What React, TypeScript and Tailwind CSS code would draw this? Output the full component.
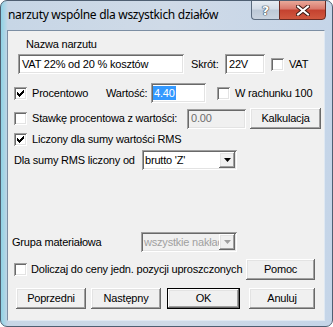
const ui = { fontFamily: '"Liberation Sans", Arial, sans-serif' };

const raised =
  "bg-[#f0f0f0] shadow-[inset_-1px_-1px_#696969,inset_1px_1px_#ffffff,inset_-2px_-2px_#a0a0a0,inset_2px_2px_#e3e3e3]";
const sunken =
  "shadow-[inset_1px_1px_#a0a0a0,inset_-1px_-1px_#ffffff,inset_2px_2px_#696969,inset_-2px_-2px_#e3e3e3]";

const CheckBox = ({ checked }: { checked?: boolean }) => (
  <div className={`w-[13px] h-[13px] shrink-0 bg-white ${sunken} flex items-center justify-center`}>
    {checked && (
      <svg width="7" height="7" viewBox="0 0 7 7">
        <path d="M0 2h1v1h1v1h1V3h1V2h1V1h1V0h1v3h-1v1h-1v1h-1v1h-1v1H2V6H1V5H0z" fill="#000" />
      </svg>
    )}
  </div>
);

const Button = ({ label, w, def }: { label: string; w: string; def?: boolean }) =>
  def ? (
    <div className={`${w} h-[21px] border border-black shrink-0`}>
      <div className={`w-full h-full ${raised} flex items-center justify-center`}>{label}</div>
    </div>
  ) : (
    <div className={`${w} h-[21px] shrink-0 ${raised} flex items-center justify-center`}>{label}</div>
  );

const Arrow = ({ color }: { color: string }) => (
  <svg width="7" height="4" viewBox="0 0 7 4">
    <path d="M0 0h7L3.5 4z" fill={color} />
  </svg>
);

const Combo = ({ value, w, disabled }: { value: string; w: string; disabled?: boolean }) => (
  <div
    className={`${w} h-[20px] shrink-0 ${sunken} ${disabled ? "bg-[#f0f0f0] text-[#a0a0a0]" : "bg-white"} flex items-center p-[2px]`}
  >
    <div className="flex-1 overflow-hidden whitespace-nowrap pl-[1px]">{value}</div>
    <div className={`w-[16px] h-[16px] shrink-0 ${raised} flex items-center justify-center`}>
      <Arrow color={disabled ? "#a0a0a0" : "#000"} />
    </div>
  </div>
);

export default function App() {
  return (
    <div className="w-[333px] h-[327px] bg-white">
      <div className="w-[333px] h-[327px] rounded-[7px] border border-[#4f5f72] bg-[linear-gradient(90deg,#8fd3e6_0px,#c7d6e6_7px,#cfdae7_50%,#c5d5e8_100%)] flex flex-col overflow-hidden">
        {/* title bar */}
        <div className="h-[29px] flex items-start shrink-0">
          <div
            className="pl-[7px] pt-[6px] text-[12px] leading-[16px] tracking-[-0.3px] text-black"
            style={{ fontFamily: '"Noto Sans", "Open Sans", sans-serif' }}
          >
            narzuty wspólne dla wszystkich działów
          </div>
          <div className="ml-auto mr-[6px] flex -mt-[1px]">
            <div className="w-[28px] h-[20px] rounded-bl-[4px] border border-[#5b6b7e] border-r-0 bg-[linear-gradient(#e6ecf3,#d3dce7_45%,#bcc8d6_50%,#c9d3df)] flex items-center justify-center">
              <span
                className="text-white font-bold text-[13px] leading-none"
                style={{ fontFamily: '"DejaVu Sans", sans-serif', textShadow: "0 0 1px #2c3540, 0 0 1px #2c3540, 0 0 1px #2c3540" }}
              >
                ?
              </span>
            </div>
            <div className="w-[47px] h-[20px] rounded-br-[4px] border border-[#6b2a22] bg-[linear-gradient(#e9a99a,#d9776a_45%,#c4412f_50%,#d0583f)] flex items-center justify-center">
              <svg width="14" height="11" viewBox="0 0 14 11">
                <path d="M2 1.5l10 8M12 1.5l-10 8" stroke="#3b1a14" strokeWidth="4" strokeLinecap="square" />
                <path d="M2 1.5l10 8M12 1.5l-10 8" stroke="#ffffff" strokeWidth="2" strokeLinecap="square" />
              </svg>
            </div>
          </div>
        </div>

        {/* client area */}
        <div
          className="ml-[6px] w-[318px] h-[291px] border border-[#7c8ea3] border-r-[#dfe8f2] border-b-[#dfe8f2] bg-[#f0f0f0] text-[11px] leading-[13px] tracking-[-0.2px] text-black flex flex-col"
          style={ui}
        >
          <div className="mt-[7px] pl-[18px] h-[13px]">Nazwa narzutu</div>

          <div className="mt-[3px] h-[20px] flex items-center pl-[10px]">
            <div className={`w-[166px] h-[20px] bg-white ${sunken} flex items-center px-[4px]`}>VAT 22% od 20 % kosztów</div>
            <div className="ml-[7px] w-[34px]">Skrót:</div>
            <div className={`w-[40px] h-[20px] bg-white ${sunken} flex items-center px-[4px]`}>22V</div>
            <div className="ml-[6px]">
              <CheckBox />
            </div>
            <div className="ml-[5px]">VAT</div>
          </div>

          <div className="mt-[9px] h-[20px] flex items-center pl-[6px]">
            <CheckBox checked />
            <div className="ml-[5px] w-[74px]">Procentowo</div>
            <div className="w-[45px]">Wartość:</div>
            <div className={`w-[55px] h-[20px] bg-white ${sunken} flex items-center px-[2px]`}>
              <span className="bg-[#3399ff] text-white px-[1px] leading-[14px]">4.40</span>
            </div>
            <div className="ml-[11px]">
              <CheckBox />
            </div>
            <div className="ml-[5px]">W rachunku 100</div>
          </div>

          <div className="mt-[5px] h-[21px] flex items-center pl-[6px]">
            <CheckBox />
            <div className="ml-[5px] w-[155px]">Stawkę procentowa z wartości:</div>
            <div className={`w-[59px] h-[20px] bg-[#f0f0f0] ${sunken} flex items-center px-[4px] text-[#6d6d6d]`}>0.00</div>
            <div className="ml-[4px]">
              <Button label="Kalkulacja" w="w-[71px]" />
            </div>
          </div>

          <div className="mt-[2px] h-[17px] flex items-center pl-[6px]">
            <CheckBox checked />
            <div className="ml-[5px]">Liczony dla sumy wartości RMS</div>
          </div>

          <div className="mt-[2px] h-[20px] flex items-center pl-[6px]">
            <div className="w-[128px]">Dla sumy RMS liczony od</div>
            <Combo value="brutto 'Z'" w="w-[95px]" />
          </div>

          <div className="mt-[62px] h-[20px] flex items-center pl-[4px]">
            <div className="w-[129px]">Grupa materiałowa</div>
            <Combo value="wszystkie nakłady" w="w-[96px]" disabled />
          </div>

          <div className="mt-[7px] h-[21px] flex items-center pl-[6px]">
            <CheckBox />
            <div className="ml-[4px] w-[215px] whitespace-nowrap">Doliczaj do ceny jedn. pozycji uproszczonych</div>
            <Button label="Pomoc" w="w-[69px]" />
          </div>

          <div className="mt-[8px] h-[21px] flex items-center pl-[8px]">
            <Button label="Poprzedni" w="w-[70px]" />
            <div className="ml-[5px]">
              <Button label="Następny" w="w-[70px]" />
            </div>
            <div className="ml-[6px]">
              <Button label="OK" w="w-[73px]" def />
            </div>
            <div className="ml-[9px]">
              <Button label="Anuluj" w="w-[66px]" />
            </div>
          </div>
        </div>
      </div>
    </div>
  );
}
